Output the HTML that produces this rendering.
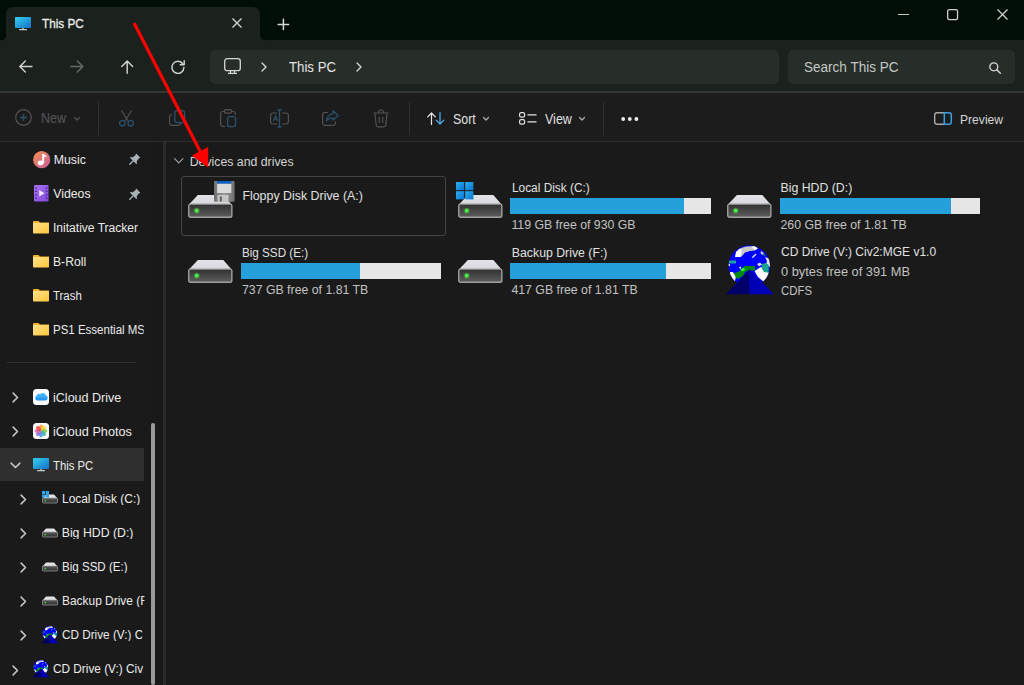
<!DOCTYPE html>
<html><head><meta charset="utf-8"><style>
html,body{margin:0;padding:0;}
body{width:1024px;height:685px;position:relative;overflow:hidden;background:#1a1a1a;font-family:"Liberation Sans", sans-serif;}
.t{position:absolute;white-space:nowrap;line-height:1;}
svg{display:block}
</style></head><body>
<div style="position:absolute;left:0px;top:0px;width:1024px;height:40px;background:#010e06;"></div>
<div style="position:absolute;left:5.5px;top:6.8px;width:254px;height:40px;background:#1b221d;border-radius:7px 7px 0 0;"></div>
<div style="position:absolute;left:0px;top:40px;width:1024px;height:51px;background:#1b221d;"></div>
<svg style="position:absolute;left:0.5px;top:35px;overflow:visible" width="5.5" height="5.5" viewBox="0 0 5.5 5.5"><path d="M5.5 0 V5.5 H0 A5.5 5.5 0 0 0 5.5 0Z" fill="#1b221d"/></svg>
<svg style="position:absolute;left:259.5px;top:35px;overflow:visible" width="5.5" height="5.5" viewBox="0 0 5.5 5.5"><path d="M0 0 V5.5 H5.5 A5.5 5.5 0 0 1 0 0Z" fill="#1b221d"/></svg>
<svg style="position:absolute;left:15px;top:16.5px;overflow:visible" width="16" height="14" viewBox="0 0 16 14"><defs><linearGradient id="tabg" x1="0" y1="0" x2="1" y2="1"><stop offset="0" stop-color="#35d0ec"/><stop offset="1" stop-color="#1470cc"/></linearGradient></defs>
<rect x="0" y="0" width="16" height="11" rx="0.8" fill="url(#tabg)"/>
<rect x="7" y="11" width="2" height="1.2" fill="#9a9a9a"/><rect x="4" y="12.1" width="8" height="1.1" rx="0.5" fill="#c9c9c9"/></svg>
<div class="t" style="left:42.3px;top:17.17px;font-size:13.5px;color:#ececec;font-weight:400;transform:scaleX(0.87);transform-origin:0 0;-webkit-text-stroke:0.3px #ececec;">This PC</div>
<svg style="position:absolute;left:231.8px;top:18.1px;overflow:visible" width="10" height="10" viewBox="0 0 10 10"><path d="M0.5 0.5 L9.5 9.5 M9.5 0.5 L0.5 9.5" stroke="#d4d4d4" stroke-width="1.35"/></svg>
<svg style="position:absolute;left:278.4px;top:18.5px;overflow:visible" width="11" height="11" viewBox="0 0 11 11"><path d="M5.4 0.3 V10.5 M0.2 5.4 H10.6" stroke="#d8d8d8" stroke-width="1.5" stroke-linecap="round"/></svg>
<div style="position:absolute;left:898px;top:13.5px;width:11.2px;height:1.05px;background:#c4c4c4;"></div>
<svg style="position:absolute;left:947px;top:9px;overflow:visible" width="11" height="11" viewBox="0 0 11 11"><rect x="0.65" y="0.65" width="9.9" height="9.9" rx="1.6" fill="none" stroke="#cfcfcf" stroke-width="1.3"/></svg>
<svg style="position:absolute;left:997px;top:9px;overflow:visible" width="11" height="11" viewBox="0 0 11 11"><path d="M0.5 0.5 L10.5 10.5 M10.5 0.5 L0.5 10.5" stroke="#cfcfcf" stroke-width="1.3"/></svg>
<svg style="position:absolute;left:18.5px;top:60px;overflow:visible" width="14" height="13" viewBox="0 0 14 13"><path d="M13 6.5 H1 M6.3 1 L0.8 6.5 L6.3 12" fill="none" stroke="#d2d2d2" stroke-width="1.45" stroke-linecap="round" stroke-linejoin="round"/></svg>
<svg style="position:absolute;left:70px;top:60px;overflow:visible" width="14" height="13" viewBox="0 0 14 13"><path d="M0.8 6.5 H12.8 M7.3 1 L12.8 6.5 L7.3 12" fill="none" stroke="#676b67" stroke-width="1.45" stroke-linecap="round" stroke-linejoin="round"/></svg>
<svg style="position:absolute;left:120.8px;top:60.2px;overflow:visible" width="13" height="14" viewBox="0 0 13 14"><path d="M6.2 13.2 V1 M0.8 6.4 L6.2 1 L11.6 6.4" fill="none" stroke="#d2d2d2" stroke-width="1.45" stroke-linecap="round" stroke-linejoin="round"/></svg>
<svg style="position:absolute;left:171px;top:60px;overflow:visible" width="14" height="14" viewBox="0 0 14 14"><path d="M11.9 4.0 A6 6 0 1 0 12.9 7.5" fill="none" stroke="#d2d2d2" stroke-width="1.45" stroke-linecap="round"/><path d="M13.2 0.8 V4.8 H9.2" fill="none" stroke="#d2d2d2" stroke-width="1.45" stroke-linecap="round" stroke-linejoin="round"/></svg>
<div style="position:absolute;left:210px;top:50px;width:569px;height:34px;background:#272d29;border-radius:5px;"></div>
<svg style="position:absolute;left:224px;top:58px;overflow:visible" width="17" height="16" viewBox="0 0 17 16"><rect x="0.7" y="0.7" width="15.6" height="12" rx="2.5" fill="none" stroke="#d6d6d6" stroke-width="1.3"/><path d="M4 15.3 H13 M6.5 13 V15.3 M10.5 13 V15.3" stroke="#d6d6d6" stroke-width="1.2"/></svg>
<svg style="position:absolute;left:261px;top:62px;overflow:visible" width="6" height="10" viewBox="0 0 6 10"><path d="M1 1 L5 5 L1 9" fill="none" stroke="#e0e0e0" stroke-width="1.2" stroke-linecap="round" stroke-linejoin="round"/></svg>
<div class="t" style="left:289.2px;top:59.28px;font-size:15.5px;color:#e4e4e4;font-weight:400;transform:scaleX(0.853);transform-origin:0 0;">This PC</div>
<svg style="position:absolute;left:356px;top:62px;overflow:visible" width="6" height="10" viewBox="0 0 6 10"><path d="M1 1 L5 5 L1 9" fill="none" stroke="#e0e0e0" stroke-width="1.2" stroke-linecap="round" stroke-linejoin="round"/></svg>
<div style="position:absolute;left:788px;top:50px;width:227px;height:34px;background:#272d29;border-radius:5px;"></div>
<div class="t" style="left:804px;top:59.08px;font-size:15.5px;color:#c4c7c4;font-weight:400;transform:scaleX(0.873);transform-origin:0 0;">Search This PC</div>
<svg style="position:absolute;left:989px;top:62px;overflow:visible" width="12" height="12" viewBox="0 0 12 12"><circle cx="4.8" cy="4.8" r="4" fill="none" stroke="#d8d8d8" stroke-width="1.3"/><path d="M7.8 7.8 L11.3 11.3" stroke="#d8d8d8" stroke-width="1.4" stroke-linecap="round"/></svg>
<div style="position:absolute;left:0px;top:91px;width:1024px;height:2px;background:#353535;"></div>
<div style="position:absolute;left:0px;top:93px;width:1024px;height:49px;background:#1c1c1c;"></div>
<div style="position:absolute;left:0px;top:141px;width:1024px;height:1.8px;background:#2d2d2d;"></div>
<svg style="position:absolute;left:15px;top:109px;overflow:visible" width="17" height="17" viewBox="0 0 17 17"><circle cx="8.5" cy="8.5" r="7.8" fill="none" stroke="#525252" stroke-width="1.2"/><path d="M8.5 4.9 V12.1 M4.9 8.5 H12.1" stroke="#29526c" stroke-width="1.5"/></svg>
<div class="t" style="left:41.4px;top:111.45px;font-size:14px;color:#525252;font-weight:400;transform:scaleX(0.89);transform-origin:0 0;-webkit-text-stroke:0.2px #525252;">New</div>
<svg style="position:absolute;left:73.6px;top:117.2px;overflow:visible" width="6" height="3.5" viewBox="0 0 6 3.5"><path d="M0.5 0.5 L3 3 L5.5 0.5" fill="none" stroke="#525252" stroke-width="1.2" stroke-linecap="round" stroke-linejoin="round"/></svg>
<div style="position:absolute;left:98px;top:102px;width:1px;height:33px;background:#303030;"></div>
<svg style="position:absolute;left:118px;top:110px;overflow:visible" width="17" height="17" viewBox="0 0 17 17"><path d="M3.5 0.5 L10 11 M13.5 0.5 L7 11" stroke="#525252" stroke-width="1.2" fill="none"/><circle cx="4.3" cy="13.3" r="2.7" fill="none" stroke="#29526c" stroke-width="1.3"/><circle cx="12.7" cy="13.3" r="2.7" fill="none" stroke="#29526c" stroke-width="1.3"/></svg>
<svg style="position:absolute;left:169px;top:110px;overflow:visible" width="17" height="17" viewBox="0 0 17 17"><path d="M3 4.5 H2.5 A2 2 0 0 0 0.6 6.5 V13.5 A2 2 0 0 0 2.5 15.4 H9.5 A2 2 0 0 0 11.5 13.5 V13" fill="none" stroke="#525252" stroke-width="1.2"/><rect x="5.8" y="0.6" width="9.8" height="12" rx="2.4" fill="none" stroke="#29526c" stroke-width="1.3"/></svg>
<svg style="position:absolute;left:220px;top:109px;overflow:visible" width="17" height="19" viewBox="0 0 17 19"><path d="M4 2.5 H2.5 A2 2 0 0 0 0.6 4.5 V15.5 A2 2 0 0 0 2.5 17.4 H5 M12 2.5 H13.5 A2 2 0 0 1 15.4 4.5 V6" fill="none" stroke="#525252" stroke-width="1.2"/><rect x="4.5" y="0.6" width="7" height="3.5" rx="1.2" fill="none" stroke="#525252" stroke-width="1.2"/><rect x="7.6" y="7.6" width="8" height="10" rx="2" fill="none" stroke="#29526c" stroke-width="1.3"/></svg>
<svg style="position:absolute;left:270px;top:109px;overflow:visible" width="19" height="19" viewBox="0 0 19 19"><path d="M7 4 H3 A2.5 2.5 0 0 0 0.6 6.5 V12.5 A2.5 2.5 0 0 0 3 15 H7 M12 4 H16 A2.5 2.5 0 0 1 18.4 6.5 V12.5 A2.5 2.5 0 0 1 16 15 H12" fill="none" stroke="#525252" stroke-width="1.2"/><path d="M9.5 1 V18 M7.5 1 H11.5 M7.5 18 H11.5" stroke="#29526c" stroke-width="1.3"/><path d="M3.6 12 L5.6 6.5 L7.6 12 M4.3 10.2 H6.9" fill="none" stroke="#29526c" stroke-width="1.1"/></svg>
<svg style="position:absolute;left:322px;top:110px;overflow:visible" width="17" height="17" viewBox="0 0 17 17"><path d="M6 2.5 H3 A2.4 2.4 0 0 0 0.6 5 V13 A2.4 2.4 0 0 0 3 15.4 H11 A2.4 2.4 0 0 0 13.4 13 V11.5" fill="none" stroke="#525252" stroke-width="1.2"/><path d="M11 0.8 L16.2 5.5 L11 10.2 V7.8 C8 7.8 6 8.8 4.5 11 C5 7 7 4.2 11 3.6 Z" fill="none" stroke="#29526c" stroke-width="1.2" stroke-linejoin="round"/></svg>
<svg style="position:absolute;left:373px;top:109px;overflow:visible" width="16" height="19" viewBox="0 0 16 19"><path d="M0.5 4 H15.5 M5.5 3.5 A2.5 2.5 0 0 1 10.5 3.5" fill="none" stroke="#525252" stroke-width="1.2"/><path d="M2 4.5 L3.2 16 A2 2 0 0 0 5.2 17.8 H10.8 A2 2 0 0 0 12.8 16 L14 4.5" fill="none" stroke="#525252" stroke-width="1.2"/><path d="M6.3 8 V14 M9.7 8 V14" stroke="#525252" stroke-width="1.2"/></svg>
<div style="position:absolute;left:409px;top:102px;width:1px;height:33px;background:#303030;"></div>
<svg style="position:absolute;left:427px;top:112px;overflow:visible" width="18" height="13" viewBox="0 0 18 13"><path d="M4.5 12.5 V1 M0.7 4.8 L4.5 1 L8.3 4.8" fill="none" stroke="#e6e6e6" stroke-width="1.2" stroke-linecap="round" stroke-linejoin="round"/><path d="M13 0.5 V12 M9.2 8.2 L13 12 L16.8 8.2" fill="none" stroke="#4cb4f0" stroke-width="1.2" stroke-linecap="round" stroke-linejoin="round"/></svg>
<div class="t" style="left:452.6px;top:111.75px;font-size:14px;color:#e0e0e0;font-weight:400;transform:scaleX(0.886);transform-origin:0 0;">Sort</div>
<svg style="position:absolute;left:482.6px;top:117.2px;overflow:visible" width="6" height="3.5" viewBox="0 0 6 3.5"><path d="M0.5 0.5 L3 3 L5.5 0.5" fill="none" stroke="#b0b0b0" stroke-width="1.2" stroke-linecap="round" stroke-linejoin="round"/></svg>
<svg style="position:absolute;left:519px;top:112px;overflow:visible" width="18" height="13" viewBox="0 0 18 13"><rect x="0.6" y="0.6" width="5" height="4.5" rx="1.6" fill="none" stroke="#e6e6e6" stroke-width="1.2"/><rect x="0.6" y="7.6" width="5" height="4.5" rx="1.6" fill="none" stroke="#e6e6e6" stroke-width="1.2"/><path d="M8.5 2.8 H17.5 M8.5 9.8 H17.5" stroke="#e6e6e6" stroke-width="1.2"/></svg>
<div class="t" style="left:545.3px;top:111.75px;font-size:14px;color:#e0e0e0;font-weight:400;transform:scaleX(0.893);transform-origin:0 0;">View</div>
<svg style="position:absolute;left:578.8px;top:117.2px;overflow:visible" width="6" height="3.5" viewBox="0 0 6 3.5"><path d="M0.5 0.5 L3 3 L5.5 0.5" fill="none" stroke="#b0b0b0" stroke-width="1.2" stroke-linecap="round" stroke-linejoin="round"/></svg>
<div style="position:absolute;left:603px;top:102px;width:1px;height:33px;background:#303030;"></div>
<svg style="position:absolute;left:621px;top:117px;overflow:visible" width="18" height="4" viewBox="0 0 18 4"><circle cx="2.2" cy="2" r="1.9" fill="#f0f0f0"/><circle cx="8.8" cy="2" r="1.9" fill="#f0f0f0"/><circle cx="15.4" cy="2" r="1.9" fill="#f0f0f0"/></svg>
<svg style="position:absolute;left:934px;top:112px;overflow:visible" width="18" height="13" viewBox="0 0 18 13"><path d="M11 0.7 H3 A2.4 2.4 0 0 0 0.7 3 V10 A2.4 2.4 0 0 0 3 12.3 H11" fill="none" stroke="#a8a8a8" stroke-width="1.4"/><path d="M10.3 0.7 H15 A2.4 2.4 0 0 1 17.3 3 V10 A2.4 2.4 0 0 1 15 12.3 H10.3 Z" fill="none" stroke="#3a9ee0" stroke-width="1.5"/></svg>
<div class="t" style="left:959.9px;top:112.79px;font-size:13.6px;color:#d6d6d6;font-weight:400;transform:scaleX(0.89);transform-origin:0 0;">Preview</div>
<div style="position:absolute;left:0px;top:142px;width:1024px;height:543px;background:#1a1a1a;"></div>
<div style="position:absolute;left:163px;top:142px;width:2.5px;height:543px;background:#2b2b2b;"></div>
<svg style="position:absolute;left:32.5px;top:150.8px;overflow:visible" width="17.4" height="17.4" viewBox="0 0 17.4 17.4"><defs><linearGradient id="mus" x1="0" y1="0" x2="1" y2="1"><stop offset="0" stop-color="#f5904e"/><stop offset="1" stop-color="#c85a9e"/></linearGradient></defs><circle cx="8.7" cy="8.7" r="8.6" fill="url(#mus)"/><path d="M10.2 3.2 V12" stroke="#fff" stroke-width="1.9"/><path d="M9.4 2.8 C11.5 3.2 13.6 4.2 13.8 6.6 C12.6 5.8 11.2 5.6 10 5.6 Z" fill="#fff"/><ellipse cx="7.6" cy="11.9" rx="2.9" ry="2.4" fill="#fff"/></svg>
<div class="t" style="left:53.7px;top:154.09px;font-size:12.3px;color:#ebebeb;font-weight:400;">Music</div>
<svg style="position:absolute;left:129px;top:153.4px;overflow:visible" width="12" height="12" viewBox="0 0 12 12"><path d="M7.2 0.6 L11.4 4.8 L9.8 5.6 L7.6 8.6 L8.2 10.2 L7.2 11 L1 4.8 L1.8 3.8 L3.4 4.4 L6.4 2.2 Z" fill="#a8b1b6"/><path d="M4 8 L0.8 11.2" stroke="#a8b1b6" stroke-width="1.4" stroke-linecap="round"/></svg>
<svg style="position:absolute;left:34px;top:185px;overflow:visible" width="14.5" height="16.5" viewBox="0 0 14.5 16.5"><defs><linearGradient id="vid" x1="0" y1="0" x2="1" y2="1"><stop offset="0" stop-color="#a872f4"/><stop offset="1" stop-color="#8248dc"/></linearGradient></defs><rect x="0" y="0" width="14.5" height="16.5" rx="1.3" fill="url(#vid)"/><g fill="#55289a"><rect x="1" y="2.2" width="1.8" height="1.5" rx="0.4"/><rect x="1" y="5.6" width="1.8" height="1.5" rx="0.4"/><rect x="1" y="9" width="1.8" height="1.5" rx="0.4"/><rect x="1" y="12.4" width="1.8" height="1.5" rx="0.4"/><rect x="11.7" y="2.2" width="1.8" height="1.5" rx="0.4"/><rect x="11.7" y="5.6" width="1.8" height="1.5" rx="0.4"/><rect x="11.7" y="9" width="1.8" height="1.5" rx="0.4"/><rect x="11.7" y="12.4" width="1.8" height="1.5" rx="0.4"/></g><path d="M5.2 5 L10.6 8.3 L5.2 11.6 Z" fill="#eee6fa"/></svg>
<div class="t" style="left:53.2px;top:188.09px;font-size:12.3px;color:#ebebeb;font-weight:400;">Videos</div>
<svg style="position:absolute;left:129px;top:187.6px;overflow:visible" width="12" height="12" viewBox="0 0 12 12"><path d="M7.2 0.6 L11.4 4.8 L9.8 5.6 L7.6 8.6 L8.2 10.2 L7.2 11 L1 4.8 L1.8 3.8 L3.4 4.4 L6.4 2.2 Z" fill="#a8b1b6"/><path d="M4 8 L0.8 11.2" stroke="#a8b1b6" stroke-width="1.4" stroke-linecap="round"/></svg>
<svg style="position:absolute;left:33px;top:221px;overflow:visible" width="16" height="13" viewBox="0 0 16 13"><defs><linearGradient id="fd0" x1="0" y1="0" x2="1" y2="1"><stop offset="0" stop-color="#ffe28c"/><stop offset="1" stop-color="#fcc63a"/></linearGradient></defs><path d="M0 1 A1 1 0 0 1 1 0 H5.5 L7 1.5 H16 V3 H0 Z" fill="#f2b52a"/><rect x="0" y="2" width="16" height="10.5" rx="0.8" fill="url(#fd0)"/></svg>
<div class="t" style="left:53.2px;top:221.89px;font-size:12.3px;color:#ebebeb;font-weight:400;width:92.35px;overflow:hidden;transform:scaleX(0.98);transform-origin:0 0;">Initative Tracker</div>
<svg style="position:absolute;left:33px;top:255px;overflow:visible" width="16" height="13" viewBox="0 0 16 13"><defs><linearGradient id="fd1" x1="0" y1="0" x2="1" y2="1"><stop offset="0" stop-color="#ffe28c"/><stop offset="1" stop-color="#fcc63a"/></linearGradient></defs><path d="M0 1 A1 1 0 0 1 1 0 H5.5 L7 1.5 H16 V3 H0 Z" fill="#f2b52a"/><rect x="0" y="2" width="16" height="10.5" rx="0.8" fill="url(#fd1)"/></svg>
<div class="t" style="left:53.2px;top:255.89px;font-size:12.3px;color:#ebebeb;font-weight:400;width:91.41px;overflow:hidden;transform:scaleX(0.99);transform-origin:0 0;">B-Roll</div>
<svg style="position:absolute;left:33px;top:289px;overflow:visible" width="16" height="13" viewBox="0 0 16 13"><defs><linearGradient id="fd2" x1="0" y1="0" x2="1" y2="1"><stop offset="0" stop-color="#ffe28c"/><stop offset="1" stop-color="#fcc63a"/></linearGradient></defs><path d="M0 1 A1 1 0 0 1 1 0 H5.5 L7 1.5 H16 V3 H0 Z" fill="#f2b52a"/><rect x="0" y="2" width="16" height="10.5" rx="0.8" fill="url(#fd2)"/></svg>
<div class="t" style="left:53.2px;top:289.89px;font-size:12.3px;color:#ebebeb;font-weight:400;width:97.31px;overflow:hidden;transform:scaleX(0.93);transform-origin:0 0;">Trash</div>
<svg style="position:absolute;left:33px;top:323px;overflow:visible" width="16" height="13" viewBox="0 0 16 13"><defs><linearGradient id="fd3" x1="0" y1="0" x2="1" y2="1"><stop offset="0" stop-color="#ffe28c"/><stop offset="1" stop-color="#fcc63a"/></linearGradient></defs><path d="M0 1 A1 1 0 0 1 1 0 H5.5 L7 1.5 H16 V3 H0 Z" fill="#f2b52a"/><rect x="0" y="2" width="16" height="10.5" rx="0.8" fill="url(#fd3)"/></svg>
<div class="t" style="left:53.2px;top:323.89px;font-size:12.3px;color:#ebebeb;font-weight:400;width:96.79px;overflow:hidden;transform:scaleX(0.935);transform-origin:0 0;">PS1 Essential MS</div>
<div style="position:absolute;left:7px;top:362px;width:129px;height:1px;background:#333333;"></div>
<svg style="position:absolute;left:11.5px;top:392px;overflow:visible" width="7" height="11" viewBox="0 0 7 11"><path d="M1.1 1.1 L5.5 5.5 L1.1 9.9" fill="none" stroke="#c8c8c8" stroke-width="1.5" stroke-linecap="round" stroke-linejoin="round"/></svg>
<svg style="position:absolute;left:33px;top:389px;overflow:visible" width="16" height="16" viewBox="0 0 16 16"><defs><linearGradient id="icd" x1="0" y1="0" x2="0" y2="1"><stop offset="0" stop-color="#52c3fa"/><stop offset="1" stop-color="#1d8ef0"/></linearGradient></defs><rect x="0" y="0" width="16" height="16" rx="3.5" fill="#fbfbfb"/><path d="M4.5 11.5 A2.5 2.5 0 0 1 3.6 6.8 A2.8 2.8 0 0 1 7 5 A3.6 3.6 0 0 1 13 6.5 A2.6 2.6 0 0 1 12.6 11.5 Z" fill="url(#icd)"/></svg>
<div class="t" style="left:53.3px;top:391.59px;font-size:12.3px;color:#ebebeb;font-weight:400;transform:scaleX(1.02);transform-origin:0 0;">iCloud Drive</div>
<svg style="position:absolute;left:11.5px;top:426px;overflow:visible" width="7" height="11" viewBox="0 0 7 11"><path d="M1.1 1.1 L5.5 5.5 L1.1 9.9" fill="none" stroke="#c8c8c8" stroke-width="1.5" stroke-linecap="round" stroke-linejoin="round"/></svg>
<svg style="position:absolute;left:33px;top:423px;overflow:visible" width="16" height="16" viewBox="0 0 16 16"><rect x="0" y="0" width="16" height="16" rx="3.5" fill="#fbfbfb"/><g transform="translate(8 8)"><ellipse cx="0" cy="-3.4" rx="1.9" ry="3" fill="#f9a23a" opacity="0.9"/><ellipse cx="0" cy="-3.4" rx="1.9" ry="3" fill="#f6d33c" opacity="0.9" transform="rotate(45)"/><ellipse cx="0" cy="-3.4" rx="1.9" ry="3" fill="#8ccf47" opacity="0.9" transform="rotate(90)"/><ellipse cx="0" cy="-3.4" rx="1.9" ry="3" fill="#3cb9a0" opacity="0.9" transform="rotate(135)"/><ellipse cx="0" cy="-3.4" rx="1.9" ry="3" fill="#4a9ee8" opacity="0.9" transform="rotate(180)"/><ellipse cx="0" cy="-3.4" rx="1.9" ry="3" fill="#8a72d6" opacity="0.9" transform="rotate(225)"/><ellipse cx="0" cy="-3.4" rx="1.9" ry="3" fill="#d568b8" opacity="0.9" transform="rotate(270)"/><ellipse cx="0" cy="-3.4" rx="1.9" ry="3" fill="#ec4a4a" opacity="0.9" transform="rotate(315)"/></g></svg>
<div class="t" style="left:53.3px;top:425.59px;font-size:12.3px;color:#ebebeb;font-weight:400;transform:scaleX(1.03);transform-origin:0 0;">iCloud Photos</div>
<div style="position:absolute;left:0px;top:448px;width:143.5px;height:33px;background:#2f2f2f;"></div>
<svg style="position:absolute;left:9.5px;top:461.5px;overflow:visible" width="11" height="7" viewBox="0 0 11 7"><path d="M1.1 1.1 L5.5 5.5 L9.9 1.1" fill="none" stroke="#c8c8c8" stroke-width="1.5" stroke-linecap="round" stroke-linejoin="round"/></svg>
<svg style="position:absolute;left:33.3px;top:458.3px;overflow:visible" width="16" height="14" viewBox="0 0 16 14"><defs><linearGradient id="sbpcg" x1="0" y1="0" x2="1" y2="1"><stop offset="0" stop-color="#35d0ec"/><stop offset="1" stop-color="#1470cc"/></linearGradient></defs>
<rect x="0" y="0" width="16" height="11" rx="0.8" fill="url(#sbpcg)"/>
<rect x="7" y="11" width="2" height="1.2" fill="#9a9a9a"/><rect x="4" y="12.1" width="8" height="1.1" rx="0.5" fill="#c9c9c9"/></svg>
<div class="t" style="left:53.3px;top:459.59px;font-size:12.3px;color:#ebebeb;font-weight:400;transform:scaleX(0.92);transform-origin:0 0;">This PC</div>
<svg style="position:absolute;left:20.3px;top:494.1px;overflow:visible" width="7" height="11" viewBox="0 0 7 11"><path d="M1.1 1.1 L5.5 5.5 L1.1 9.9" fill="none" stroke="#c8c8c8" stroke-width="1.5" stroke-linecap="round" stroke-linejoin="round"/></svg>
<svg style="position:absolute;left:41.6px;top:494.1px;overflow:visible" width="16" height="10" viewBox="0 0 16 10"><defs><linearGradient id="sd0" x1="0" y1="0" x2="0" y2="1"><stop offset="0" stop-color="#5a5a5a"/><stop offset="1" stop-color="#2e2e2e"/></linearGradient></defs><path d="M0.5 4.5 L4 0.5 H12 L15.5 4.5 Z" fill="#e2e2e6"/><rect x="0.45" y="4" width="15.1" height="5" rx="0.9" fill="url(#sd0)" stroke="#a8a8a8" stroke-width="0.7"/><circle cx="3.2" cy="6.6" r="0.9" fill="#3fd03f"/></svg>
<svg style="position:absolute;left:41.6px;top:491.0px;overflow:visible" width="7" height="6.5" viewBox="0 0 7 6.5"><g fill="#2aa6ec"><rect x="0" y="0" width="3.2" height="3"/><rect x="3.8" y="0" width="3.2" height="3"/><rect x="0" y="3.5" width="3.2" height="3"/><rect x="3.8" y="3.5" width="3.2" height="3"/></g></svg>
<div class="t" style="left:61.7px;top:493.19px;font-size:12.3px;color:#ebebeb;font-weight:400;width:84.54px;overflow:hidden;transform:scaleX(0.97);transform-origin:0 0;">Local Disk (C:)</div>
<svg style="position:absolute;left:20.3px;top:528.1px;overflow:visible" width="7" height="11" viewBox="0 0 7 11"><path d="M1.1 1.1 L5.5 5.5 L1.1 9.9" fill="none" stroke="#c8c8c8" stroke-width="1.5" stroke-linecap="round" stroke-linejoin="round"/></svg>
<svg style="position:absolute;left:41.6px;top:528.1px;overflow:visible" width="16" height="10" viewBox="0 0 16 10"><defs><linearGradient id="sd1" x1="0" y1="0" x2="0" y2="1"><stop offset="0" stop-color="#5a5a5a"/><stop offset="1" stop-color="#2e2e2e"/></linearGradient></defs><path d="M0.5 4.5 L4 0.5 H12 L15.5 4.5 Z" fill="#e2e2e6"/><rect x="0.45" y="4" width="15.1" height="5" rx="0.9" fill="url(#sd1)" stroke="#a8a8a8" stroke-width="0.7"/><circle cx="3.2" cy="6.6" r="0.9" fill="#3fd03f"/></svg>
<div class="t" style="left:61.7px;top:527.19px;font-size:12.3px;color:#ebebeb;font-weight:400;width:82.0px;overflow:hidden;transform:scaleX(1.0);transform-origin:0 0;">Big HDD (D:)</div>
<svg style="position:absolute;left:20.3px;top:562.1px;overflow:visible" width="7" height="11" viewBox="0 0 7 11"><path d="M1.1 1.1 L5.5 5.5 L1.1 9.9" fill="none" stroke="#c8c8c8" stroke-width="1.5" stroke-linecap="round" stroke-linejoin="round"/></svg>
<svg style="position:absolute;left:41.6px;top:562.1px;overflow:visible" width="16" height="10" viewBox="0 0 16 10"><defs><linearGradient id="sd2" x1="0" y1="0" x2="0" y2="1"><stop offset="0" stop-color="#5a5a5a"/><stop offset="1" stop-color="#2e2e2e"/></linearGradient></defs><path d="M0.5 4.5 L4 0.5 H12 L15.5 4.5 Z" fill="#e2e2e6"/><rect x="0.45" y="4" width="15.1" height="5" rx="0.9" fill="url(#sd2)" stroke="#a8a8a8" stroke-width="0.7"/><circle cx="3.2" cy="6.6" r="0.9" fill="#3fd03f"/></svg>
<div class="t" style="left:61.7px;top:561.19px;font-size:12.3px;color:#ebebeb;font-weight:400;width:87.23px;overflow:hidden;transform:scaleX(0.94);transform-origin:0 0;">Big SSD (E:)</div>
<svg style="position:absolute;left:20.3px;top:596.1px;overflow:visible" width="7" height="11" viewBox="0 0 7 11"><path d="M1.1 1.1 L5.5 5.5 L1.1 9.9" fill="none" stroke="#c8c8c8" stroke-width="1.5" stroke-linecap="round" stroke-linejoin="round"/></svg>
<svg style="position:absolute;left:41.6px;top:596.1px;overflow:visible" width="16" height="10" viewBox="0 0 16 10"><defs><linearGradient id="sd3" x1="0" y1="0" x2="0" y2="1"><stop offset="0" stop-color="#5a5a5a"/><stop offset="1" stop-color="#2e2e2e"/></linearGradient></defs><path d="M0.5 4.5 L4 0.5 H12 L15.5 4.5 Z" fill="#e2e2e6"/><rect x="0.45" y="4" width="15.1" height="5" rx="0.9" fill="url(#sd3)" stroke="#a8a8a8" stroke-width="0.7"/><circle cx="3.2" cy="6.6" r="0.9" fill="#3fd03f"/></svg>
<div class="t" style="left:61.7px;top:595.19px;font-size:12.3px;color:#ebebeb;font-weight:400;width:84.54px;overflow:hidden;transform:scaleX(0.97);transform-origin:0 0;">Backup Drive (F:)</div>
<svg style="position:absolute;left:20.3px;top:630.1px;overflow:visible" width="7" height="11" viewBox="0 0 7 11"><path d="M1.1 1.1 L5.5 5.5 L1.1 9.9" fill="none" stroke="#c8c8c8" stroke-width="1.5" stroke-linecap="round" stroke-linejoin="round"/></svg>
<div style="position:absolute;left:40.6px;top:625.8000000000001px;width:18px;height:18px;overflow:hidden"><svg width="18" height="18" viewBox="0 0 51 51" style="display:block"><defs><clipPath id="cds0c"><circle cx="25.25" cy="21" r="20.7"/></clipPath></defs>
<circle cx="25.25" cy="21" r="20.7" fill="#0000ff"/>
<g clip-path="url(#cds0c)">
<path d="M11 12 L12 7 L15 4 L18 3 L18 8 L17 12 Z" fill="#ffffff"/>
<path d="M17 3 L22 1.5 L31 1 L34 3.5 L31 5.5 L26 6 L21 7.5 L18 11 L16.5 12 L17.5 7 Z" fill="#c8c8c8"/>
<path d="M28 1.5 L32 2 L33.5 4 L30 4.5 Z" fill="#ffffff"/>
<path d="M27.5 12.5 L31.5 8.5 L32.5 9.5 L29 13 Z" fill="#d8d8d8"/>
<path d="M37 6 L40 8 L39 10 L36.5 8.5 Z" fill="#c8c8c8"/>
<path d="M38.5 8 L41.5 10 L40.5 11.5 Z" fill="#10a030"/>
<path d="M41 12 L46 14 L46 22 L42 20 L43 16 Z" fill="#e8e8e8"/>
<path d="M4 15.5 L12 15.5 L12 18.5 L4 18.5 Z" fill="#20a0a0"/>
<path d="M4 19 L6 19 L6 21 L4 21 Z" fill="#e0e0e0"/>
<path d="M20.3 21 L31 21 L31 25.6 L25 25.6 L21 27 L19 31 L14 33.7 L10 32 L10 28 L15 26.5 L18 24.5 Z" fill="#008a10"/>
<path d="M16.5 24 L20 22.8 L21 25 L18 26.5 Z" fill="#30ff30"/>
<path d="M14.5 22.5 L17 21.5 L17 24 Z" fill="#e8e8e8"/>
<path d="M6 27 L9 27 L11.7 32 L11 36 L8 36 L6 31 Z" fill="#ffffff"/>
<path d="M30.5 26 L37 22 L41 24 L44.7 27.7 L44.7 36.3 L40 37 L34 32 Z" fill="#ffffff"/>
<path d="M37.6 19 L42 18 L44.7 20 L44.7 27.7 L40 27 L38 24 Z" fill="#18a090"/>
<path d="M33 19 L36 17.5 L38 19.5 L35 21.5 Z" fill="#d8d8d8"/>
</g>
<path d="M25.4 24.2 L1.8 49.2 H25.4 Z" fill="#000068"/><path d="M25.4 24.2 L50 49.2 H25.4 Z" fill="#0000b4"/>
</svg></div>
<div class="t" style="left:61.7px;top:629.19px;font-size:12.3px;color:#ebebeb;font-weight:400;width:83.98px;overflow:hidden;transform:scaleX(0.955);transform-origin:0 0;">CD Drive (V:) Civ2:MGE v1.0</div>
<svg style="position:absolute;left:11.5px;top:664.5px;overflow:visible" width="7" height="11" viewBox="0 0 7 11"><path d="M1.1 1.1 L5.5 5.5 L1.1 9.9" fill="none" stroke="#c8c8c8" stroke-width="1.5" stroke-linecap="round" stroke-linejoin="round"/></svg>
<div style="position:absolute;left:31.8px;top:659.9px;width:18px;height:18px;overflow:hidden"><svg width="18" height="18" viewBox="0 0 51 51" style="display:block"><defs><clipPath id="cds1c"><circle cx="25.25" cy="21" r="20.7"/></clipPath></defs>
<circle cx="25.25" cy="21" r="20.7" fill="#0000ff"/>
<g clip-path="url(#cds1c)">
<path d="M11 12 L12 7 L15 4 L18 3 L18 8 L17 12 Z" fill="#ffffff"/>
<path d="M17 3 L22 1.5 L31 1 L34 3.5 L31 5.5 L26 6 L21 7.5 L18 11 L16.5 12 L17.5 7 Z" fill="#c8c8c8"/>
<path d="M28 1.5 L32 2 L33.5 4 L30 4.5 Z" fill="#ffffff"/>
<path d="M27.5 12.5 L31.5 8.5 L32.5 9.5 L29 13 Z" fill="#d8d8d8"/>
<path d="M37 6 L40 8 L39 10 L36.5 8.5 Z" fill="#c8c8c8"/>
<path d="M38.5 8 L41.5 10 L40.5 11.5 Z" fill="#10a030"/>
<path d="M41 12 L46 14 L46 22 L42 20 L43 16 Z" fill="#e8e8e8"/>
<path d="M4 15.5 L12 15.5 L12 18.5 L4 18.5 Z" fill="#20a0a0"/>
<path d="M4 19 L6 19 L6 21 L4 21 Z" fill="#e0e0e0"/>
<path d="M20.3 21 L31 21 L31 25.6 L25 25.6 L21 27 L19 31 L14 33.7 L10 32 L10 28 L15 26.5 L18 24.5 Z" fill="#008a10"/>
<path d="M16.5 24 L20 22.8 L21 25 L18 26.5 Z" fill="#30ff30"/>
<path d="M14.5 22.5 L17 21.5 L17 24 Z" fill="#e8e8e8"/>
<path d="M6 27 L9 27 L11.7 32 L11 36 L8 36 L6 31 Z" fill="#ffffff"/>
<path d="M30.5 26 L37 22 L41 24 L44.7 27.7 L44.7 36.3 L40 37 L34 32 Z" fill="#ffffff"/>
<path d="M37.6 19 L42 18 L44.7 20 L44.7 27.7 L40 27 L38 24 Z" fill="#18a090"/>
<path d="M33 19 L36 17.5 L38 19.5 L35 21.5 Z" fill="#d8d8d8"/>
</g>
<path d="M25.4 24.2 L1.8 49.2 H25.4 Z" fill="#000068"/><path d="M25.4 24.2 L50 49.2 H25.4 Z" fill="#0000b4"/>
</svg></div>
<div class="t" style="left:53.2px;top:663.39px;font-size:12.3px;color:#ebebeb;font-weight:400;width:94.27px;overflow:hidden;transform:scaleX(0.96);transform-origin:0 0;">CD Drive (V:) Civ2:MGE v1.0</div>
<div style="position:absolute;left:155px;top:142px;width:8px;height:543px;background:#191919;"></div>
<div style="position:absolute;left:151px;top:423px;width:4px;height:262px;background:#999999;border-radius:2px;"></div>
<svg style="position:absolute;left:174px;top:157.5px;overflow:visible" width="10" height="6" viewBox="0 0 10 6"><path d="M0.6 0.6 L4.8 4.9 L9 0.6" fill="none" stroke="#a8a8a8" stroke-width="1.1" stroke-linecap="round" stroke-linejoin="round"/></svg>
<div class="t" style="left:189.7px;top:155.59px;font-size:12.3px;color:#d4d4d4;font-weight:400;">Devices and drives</div>
<div style="position:absolute;left:181px;top:175.5px;width:265px;height:60px;background:transparent;box-sizing:border-box;border:1px solid #454545;border-radius:3px;"></div>
<svg style="position:absolute;left:188.4px;top:194.7px;overflow:visible" width="45" height="23" viewBox="0 0 45 23"><defs><linearGradient id="bd0f" x1="0" y1="0" x2="0" y2="1"><stop offset="0" stop-color="#303030"/><stop offset="1" stop-color="#5e5e5e"/></linearGradient><linearGradient id="bd0t" x1="0" y1="0" x2="0" y2="1"><stop offset="0" stop-color="#e2e3e7"/><stop offset="1" stop-color="#d8d9dd"/></linearGradient></defs><path d="M0.9 9.4 L9.9 0 H35.3 L43.6 9.4 Z" fill="url(#bd0t)"/><rect x="0.75" y="9.1" width="43.1" height="13.2" rx="1.8" fill="url(#bd0f)" stroke="#a0a0a0" stroke-width="1.4"/><circle cx="8.7" cy="15.7" r="3.2" fill="#3ce03c" opacity="0.22"/><circle cx="8.7" cy="15.7" r="2.1" fill="#4ae84a"/></svg>
<svg style="position:absolute;left:213.7px;top:181px;overflow:visible" width="21" height="21" viewBox="0 0 21 21"><defs><linearGradient id="flg" x1="0" y1="0" x2="1" y2="0"><stop offset="0" stop-color="#6e6e6e"/><stop offset="0.5" stop-color="#9a9a9a"/><stop offset="1" stop-color="#6e6e6e"/></linearGradient></defs><rect x="0" y="0" width="20.6" height="20.8" rx="0.8" fill="url(#flg)"/><rect x="3.1" y="0" width="14.2" height="2.8" fill="#0c5fc0"/><rect x="3.1" y="2.8" width="14.2" height="9.2" fill="#dadada"/><rect x="3.5" y="14" width="11" height="6.8" fill="#c6c6c6"/><rect x="5.8" y="15.5" width="2" height="5" fill="#5e5e5e"/></svg>
<div class="t" style="left:242.4px;top:190.10px;font-size:12.4px;color:#e0e0e0;font-weight:400;">Floppy Disk Drive (A:)</div>
<svg style="position:absolute;left:457.8px;top:194.7px;overflow:visible" width="45" height="23" viewBox="0 0 45 23"><defs><linearGradient id="bd1f" x1="0" y1="0" x2="0" y2="1"><stop offset="0" stop-color="#303030"/><stop offset="1" stop-color="#5e5e5e"/></linearGradient><linearGradient id="bd1t" x1="0" y1="0" x2="0" y2="1"><stop offset="0" stop-color="#e2e3e7"/><stop offset="1" stop-color="#d8d9dd"/></linearGradient></defs><path d="M0.9 9.4 L9.9 0 H35.3 L43.6 9.4 Z" fill="url(#bd1t)"/><rect x="0.75" y="9.1" width="43.1" height="13.2" rx="1.8" fill="url(#bd1f)" stroke="#a0a0a0" stroke-width="1.4"/><circle cx="8.7" cy="15.7" r="3.2" fill="#3ce03c" opacity="0.22"/><circle cx="8.7" cy="15.7" r="2.1" fill="#4ae84a"/></svg>
<svg style="position:absolute;left:456.3px;top:181.7px;overflow:visible" width="17.5" height="17.5" viewBox="0 0 17.5 17.5"><defs><linearGradient id="wl" x1="0" y1="0" x2="1" y2="1"><stop offset="0" stop-color="#2cb0ee"/><stop offset="1" stop-color="#0a74d2"/></linearGradient></defs><g fill="url(#wl)"><rect x="0" y="0" width="8.2" height="8.2"/><rect x="9.2" y="0" width="8.2" height="8.2"/><rect x="0" y="9.2" width="8.2" height="8.2"/><rect x="9.2" y="9.2" width="8.2" height="8.2"/></g></svg>
<div class="t" style="left:511.8px;top:181.69px;font-size:12.3px;color:#e0e0e0;font-weight:400;transform:scaleX(0.964);transform-origin:0 0;">Local Disk (C:)</div>
<div style="position:absolute;left:510px;top:197.60000000000002px;width:200.5px;height:16.3px;background:#e6e6e6;"></div>
<div style="position:absolute;left:510px;top:197.60000000000002px;width:173.6px;height:16.3px;background:#26a0da;"></div>
<div class="t" style="left:511.4px;top:219.29px;font-size:12.3px;color:#c2c2c2;font-weight:400;">119 GB free of 930 GB</div>
<svg style="position:absolute;left:727.2px;top:194.7px;overflow:visible" width="45" height="23" viewBox="0 0 45 23"><defs><linearGradient id="bd2f" x1="0" y1="0" x2="0" y2="1"><stop offset="0" stop-color="#303030"/><stop offset="1" stop-color="#5e5e5e"/></linearGradient><linearGradient id="bd2t" x1="0" y1="0" x2="0" y2="1"><stop offset="0" stop-color="#e2e3e7"/><stop offset="1" stop-color="#d8d9dd"/></linearGradient></defs><path d="M0.9 9.4 L9.9 0 H35.3 L43.6 9.4 Z" fill="url(#bd2t)"/><rect x="0.75" y="9.1" width="43.1" height="13.2" rx="1.8" fill="url(#bd2f)" stroke="#a0a0a0" stroke-width="1.4"/><circle cx="8.7" cy="15.7" r="3.2" fill="#3ce03c" opacity="0.22"/><circle cx="8.7" cy="15.7" r="2.1" fill="#4ae84a"/></svg>
<div class="t" style="left:780.5px;top:181.79px;font-size:12.3px;color:#e0e0e0;font-weight:400;">Big HDD (D:)</div>
<div style="position:absolute;left:779.5px;top:197.60000000000002px;width:200.5px;height:16.3px;background:#e6e6e6;"></div>
<div style="position:absolute;left:779.5px;top:197.60000000000002px;width:171.6px;height:16.3px;background:#26a0da;"></div>
<div class="t" style="left:780.5px;top:219.09px;font-size:12.3px;color:#c2c2c2;font-weight:400;">260 GB free of 1.81 TB</div>
<svg style="position:absolute;left:188.4px;top:259.9px;overflow:visible" width="45" height="23" viewBox="0 0 45 23"><defs><linearGradient id="bd3f" x1="0" y1="0" x2="0" y2="1"><stop offset="0" stop-color="#303030"/><stop offset="1" stop-color="#5e5e5e"/></linearGradient><linearGradient id="bd3t" x1="0" y1="0" x2="0" y2="1"><stop offset="0" stop-color="#e2e3e7"/><stop offset="1" stop-color="#d8d9dd"/></linearGradient></defs><path d="M0.9 9.4 L9.9 0 H35.3 L43.6 9.4 Z" fill="url(#bd3t)"/><rect x="0.75" y="9.1" width="43.1" height="13.2" rx="1.8" fill="url(#bd3f)" stroke="#a0a0a0" stroke-width="1.4"/><circle cx="8.7" cy="15.7" r="3.2" fill="#3ce03c" opacity="0.22"/><circle cx="8.7" cy="15.7" r="2.1" fill="#4ae84a"/></svg>
<div class="t" style="left:242px;top:246.99px;font-size:12.3px;color:#e0e0e0;font-weight:400;transform:scaleX(0.948);transform-origin:0 0;">Big SSD (E:)</div>
<div style="position:absolute;left:240.6px;top:262.6px;width:200.5px;height:16.3px;background:#e6e6e6;"></div>
<div style="position:absolute;left:240.6px;top:262.6px;width:119.7px;height:16.3px;background:#26a0da;"></div>
<div class="t" style="left:242px;top:284.39px;font-size:12.3px;color:#c2c2c2;font-weight:400;">737 GB free of 1.81 TB</div>
<svg style="position:absolute;left:457.8px;top:259.9px;overflow:visible" width="45" height="23" viewBox="0 0 45 23"><defs><linearGradient id="bd4f" x1="0" y1="0" x2="0" y2="1"><stop offset="0" stop-color="#303030"/><stop offset="1" stop-color="#5e5e5e"/></linearGradient><linearGradient id="bd4t" x1="0" y1="0" x2="0" y2="1"><stop offset="0" stop-color="#e2e3e7"/><stop offset="1" stop-color="#d8d9dd"/></linearGradient></defs><path d="M0.9 9.4 L9.9 0 H35.3 L43.6 9.4 Z" fill="url(#bd4t)"/><rect x="0.75" y="9.1" width="43.1" height="13.2" rx="1.8" fill="url(#bd4f)" stroke="#a0a0a0" stroke-width="1.4"/><circle cx="8.7" cy="15.7" r="3.2" fill="#3ce03c" opacity="0.22"/><circle cx="8.7" cy="15.7" r="2.1" fill="#4ae84a"/></svg>
<div class="t" style="left:511.8px;top:246.99px;font-size:12.3px;color:#e0e0e0;font-weight:400;">Backup Drive (F:)</div>
<div style="position:absolute;left:510px;top:262.6px;width:200.5px;height:16.3px;background:#e6e6e6;"></div>
<div style="position:absolute;left:510px;top:262.6px;width:155.6px;height:16.3px;background:#26a0da;"></div>
<div class="t" style="left:511.4px;top:284.39px;font-size:12.3px;color:#c2c2c2;font-weight:400;">417 GB free of 1.81 TB</div>
<div style="position:absolute;left:724px;top:245px;width:51px;height:51px"><svg width="51" height="51" viewBox="0 0 51 51" style="display:block"><defs><clipPath id="cdbc"><circle cx="25.25" cy="21" r="20.7"/></clipPath></defs>
<circle cx="25.25" cy="21" r="20.7" fill="#0000ff"/>
<g clip-path="url(#cdbc)">
<path d="M11 12 L12 7 L15 4 L18 3 L18 8 L17 12 Z" fill="#ffffff"/>
<path d="M17 3 L22 1.5 L31 1 L34 3.5 L31 5.5 L26 6 L21 7.5 L18 11 L16.5 12 L17.5 7 Z" fill="#c8c8c8"/>
<path d="M28 1.5 L32 2 L33.5 4 L30 4.5 Z" fill="#ffffff"/>
<path d="M27.5 12.5 L31.5 8.5 L32.5 9.5 L29 13 Z" fill="#d8d8d8"/>
<path d="M37 6 L40 8 L39 10 L36.5 8.5 Z" fill="#c8c8c8"/>
<path d="M38.5 8 L41.5 10 L40.5 11.5 Z" fill="#10a030"/>
<path d="M41 12 L46 14 L46 22 L42 20 L43 16 Z" fill="#e8e8e8"/>
<path d="M4 15.5 L12 15.5 L12 18.5 L4 18.5 Z" fill="#20a0a0"/>
<path d="M4 19 L6 19 L6 21 L4 21 Z" fill="#e0e0e0"/>
<path d="M20.3 21 L31 21 L31 25.6 L25 25.6 L21 27 L19 31 L14 33.7 L10 32 L10 28 L15 26.5 L18 24.5 Z" fill="#008a10"/>
<path d="M16.5 24 L20 22.8 L21 25 L18 26.5 Z" fill="#30ff30"/>
<path d="M14.5 22.5 L17 21.5 L17 24 Z" fill="#e8e8e8"/>
<path d="M6 27 L9 27 L11.7 32 L11 36 L8 36 L6 31 Z" fill="#ffffff"/>
<path d="M30.5 26 L37 22 L41 24 L44.7 27.7 L44.7 36.3 L40 37 L34 32 Z" fill="#ffffff"/>
<path d="M37.6 19 L42 18 L44.7 20 L44.7 27.7 L40 27 L38 24 Z" fill="#18a090"/>
<path d="M33 19 L36 17.5 L38 19.5 L35 21.5 Z" fill="#d8d8d8"/>
</g>
<path d="M25.4 24.2 L1.8 49.2 H25.4 Z" fill="#000068"/><path d="M25.4 24.2 L50 49.2 H25.4 Z" fill="#0000b4"/>
</svg></div>
<div class="t" style="left:780.5px;top:246.49px;font-size:12.3px;color:#e0e0e0;font-weight:400;transform:scaleX(0.977);transform-origin:0 0;">CD Drive (V:) Civ2:MGE v1.0</div>
<div class="t" style="left:780.5px;top:265.59px;font-size:12.3px;color:#c2c2c2;font-weight:400;transform:scaleX(1.043);transform-origin:0 0;">0 bytes free of 391 MB</div>
<div class="t" style="left:780.5px;top:284.79px;font-size:12.3px;color:#c2c2c2;font-weight:400;transform:scaleX(0.925);transform-origin:0 0;">CDFS</div>
<svg style="position:absolute;left:0px;top:0px;overflow:visible" width="1024" height="685" viewBox="0 0 1024 685"><path d="M134 23 L201 153" stroke="#ff0000" stroke-width="3.2" stroke-linecap="butt"/><path d="M208.2 167.5 L191.8 155.5 L208.2 147 Z" fill="#ff0000"/></svg>
</body></html>
